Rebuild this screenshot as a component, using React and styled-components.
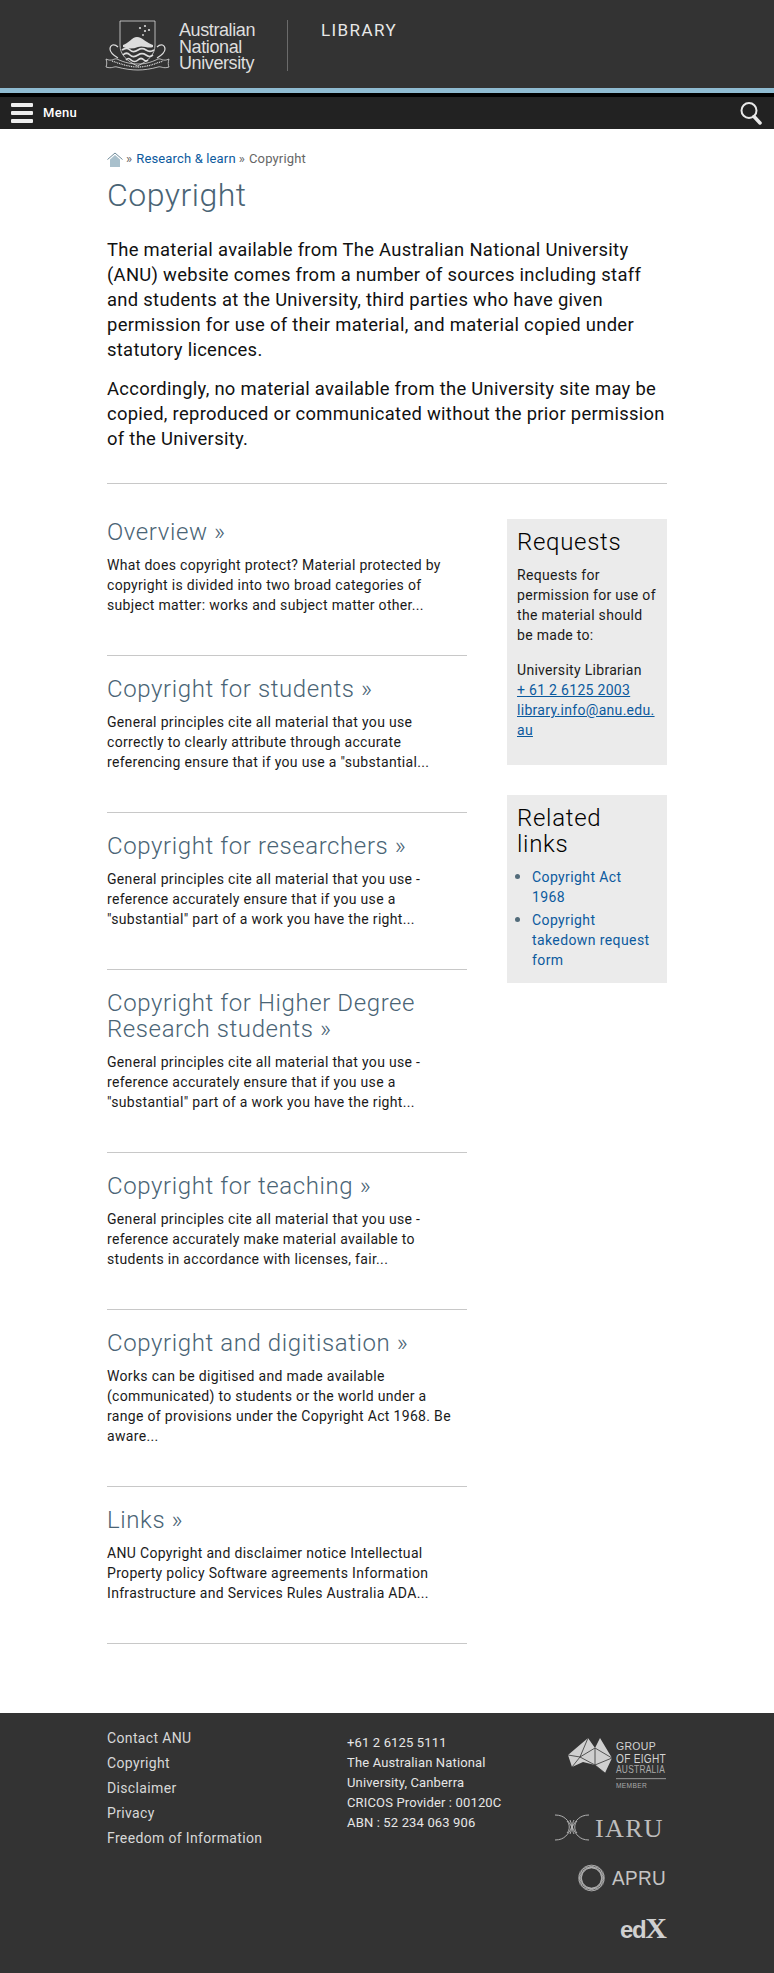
import React from 'react'
import styled, { createGlobalStyle } from 'styled-components'

const Global = createGlobalStyle`
  html, body { margin: 0; padding: 0; background: #fff; }
  body {
    font-family: Roboto, "Noto Sans", sans-serif;
    font-size: 14px;
    font-weight: 400;
    line-height: 20px;
    letter-spacing: 0.35px;
    color: #111;
  }
  a { color: #0b5a9e; text-decoration: none; }
`

const Header = styled.header`
  height: 88px;
  background: #333;
  padding: 20px 0 0 105px;
  box-sizing: border-box;
  display: flex;
  align-items: flex-start;
`
const Crest = styled.svg`
  width: 65px;
  height: 51px;
  flex: none;
`
const Wordmark = styled.div`
  margin-left: 9px;
  padding-top: 2px;
  width: 108px;
  font-family: "Liberation Sans", Arial, sans-serif;
  font-size: 18px;
  line-height: 16.5px;
  letter-spacing: -0.4px;
  color: #dedede;
`
const Divider = styled.div`
  width: 1px;
  height: 51px;
  background: #6b6b6b;
`
const SiteName = styled.div`
  margin-left: 33px;
  font-size: 17px;
  line-height: 20px;
  letter-spacing: 1.4px;
  color: #e8e8e8;
`
const Stripe = styled.div`
  height: 5px;
  background: #8fbbd1;
`
const Nav = styled.nav`
  height: 36px;
  border-top: 4px solid #000;
  box-sizing: border-box;
  background: #222;
  display: flex;
  align-items: center;
  padding: 0 12px 0 11px;
`
const Burger = styled.div`
  width: 22px;
  height: 20px;
  display: flex;
  flex-direction: column;
  justify-content: space-between;
  span {
    height: 4px;
    border-radius: 1px;
    background: #eee;
  }
`
const MenuLabel = styled.span`
  margin-left: 10px;
  font-size: 13px;
  font-weight: 500;
  letter-spacing: 0.3px;
  color: #fff;
`
const SearchIcon = styled.svg`
  margin-left: auto;
  width: 22px;
  height: 24px;
`

const Main = styled.main`
  width: 560px;
  margin: 0 auto;
  padding-top: 20px;
  height: 1584px;
  box-sizing: border-box;
`
const Crumbs = styled.div`
  display: flex;
  align-items: center;
  height: 20px;
  font-size: 13px;
  letter-spacing: 0.15px;
  color: #666;
  svg { margin-right: 3px; }
  span { margin: 0 4px 0 0; }
  a { margin-right: 3px; }
`
const Title = styled.h1`
  margin: 6px 0 22px;
  font-size: 32px;
  line-height: 40px;
  font-weight: 300;
  letter-spacing: 0.5px;
  color: #4a6475;
`
const Lead = styled.p`
  margin: 0 0 14px;
  font-size: 18.4px;
  line-height: 25px;
  letter-spacing: 0.3px;
  color: #111;
`
const Rule = styled.hr`
  margin: 32px 0 35px;
  border: 0;
  border-top: 1px solid #c8c8c8;
`
const Columns = styled.div`
  display: grid;
  grid-template-columns: 360px 160px;
  column-gap: 40px;
  align-items: start;
`
const Item = styled.article`
  border-bottom: 1px solid #c8c8c8;
  padding-bottom: 40px;
  margin-bottom: 20px;
`
const ItemTitle = styled.h2`
  margin: 0 0 10px;
  font-size: 24px;
  line-height: 26px;
  font-weight: 300;
  letter-spacing: 0.6px;
  color: #4a6475;
`
const ItemText = styled.p`
  margin: 0;
  padding-right: 6px;
  font-size: 14px;
  line-height: 20px;
  letter-spacing: 0.32px;
  color: #1a1a1a;
`
const Side = styled.aside`
  display: flex;
  flex-direction: column;
  gap: 30px;
`
const Box = styled.section`
  background: #ebebeb;
  padding: 10px 10px 0;
  height: ${p => p.$h}px;
  box-sizing: border-box;
`
const BoxTitle = styled.h3`
  margin: 0 0 10px;
  font-size: 24px;
  line-height: 26px;
  font-weight: 300;
  letter-spacing: 0.7px;
  color: #000;
`
const BoxText = styled.p`
  margin: 0 0 15px;
  font-size: 14px;
  line-height: 20px;
  letter-spacing: 0.3px;
  color: #1a1a1a;
  a { text-decoration: underline; overflow-wrap: anywhere; }
`
const LinkList = styled.ul`
  margin: 0;
  padding: 0 3px 0 15px;
  letter-spacing: 0.4px;
  color: #526b7a;
  li { margin-bottom: 3px; }
  li::marker { font-size: 16px; }
`

const Footer = styled.footer`
  background: #333;
  height: 260px;
  padding: 13px 107px 0;
  box-sizing: border-box;
  display: grid;
  grid-template-columns: 240px 1fr auto;
  color: #ddd;
`
const FooterLinks = styled.div`
  display: flex;
  flex-direction: column;
  a {
    color: #d8d8d8;
    line-height: 25px;
  }
`
const Address = styled.div`
  padding-top: 7px;
  font-size: 13px;
  line-height: 20px;
  letter-spacing: 0.15px;
  max-width: 160px;
  color: #e6e6e6;
`
const Logos = styled.div`
  display: flex;
  flex-direction: column;
  align-items: flex-end;
  padding-top: 12px;
`
const Logo = styled.svg`
  display: block;
  overflow: visible;
  margin-top: ${p => p.$mt || 0}px;
  margin-right: ${p => p.$mr || 0}px;
`

const items = [
  ['Overview »', 'What does copyright protect? Material protected by copyright is divided into two broad categories of subject matter: works and subject matter other...'],
  ['Copyright for students »', 'General principles cite all material that you use correctly to clearly attribute through accurate referencing ensure that if you use a "substantial...'],
  ['Copyright for researchers »', 'General principles cite all material that you use - reference accurately ensure that if you use a "substantial" part of a work you have the right...'],
  ['Copyright for Higher Degree Research students »', 'General principles cite all material that you use - reference accurately ensure that if you use a "substantial" part of a work you have the right...'],
  ['Copyright for teaching »', 'General principles cite all material that you use - reference accurately make material available to students in accordance with licenses, fair...'],
  ['Copyright and digitisation »', 'Works can be digitised and made available (communicated) to students or the world under a range of provisions under the Copyright Act 1968. Be aware...'],
  ['Links »', 'ANU Copyright and disclaimer notice Intellectual Property policy Software agreements Information Infrastructure and Services Rules Australia ADA...'],
]

function CrestLogo() {
  return (
    <Crest viewBox="0 0 65 51" fill="none" stroke="#dcdcdc" strokeWidth="0.8">
      <path d="M15 1l35 0 0 24c0 10-7 16-17.500 21C22 41 15 35 15 25z" />
      <g fill="#dcdcdc" stroke="none">
        <circle cx="35" cy="8" r="1.100" />
        <circle cx="40" cy="6" r="1.100" />
        <circle cx="44" cy="10" r="1.100" />
        <circle cx="40" cy="11" r="1.100" />
        <circle cx="38" cy="15" r="0.900" />
        <path d="M18 25c5-1 9-8 14-8s11 7 16 8v2c-5 2-10-2-15 0s-10 2-15 0z" />
      </g>
      <g stroke="#dcdcdc" strokeWidth="1.700">
        <path d="M17 30c4-3 6-2 8 0s5 2 8 0 5-2 8 0 5 2 8 0" />
        <path d="M18 35c3-3 5-2 7 0s5 2 8 0 5-2 8 0 4 2 7 0" />
        <path d="M21 40c2-2 3-2 5 0s5 2 7 0 4-2 6 0 3 1 4 0" />
      </g>
      <path d="M13 27c-4-4-8-2-8 2 0 3 3 6 8 9M52 27c4-4 8-2 8 2 0 3-3 6-8 9" strokeWidth="1.200" />
      <path d="M1 39c6 3 8-1 11 0 8 4 15 5 21 5s12-1 20-5c3-1 5 3 11 0-1 3-1 6 0 8-6 2-8-1-11 0-7 2-14 3-20 3s-14-1-21-3c-3-1-5 2-11 0 1-3 1-5 0-8z" />
      <path d="M7 41c9 3 17 6 26 6s16-3 25-6" strokeDasharray="1 0.800" strokeWidth="1.300" />
    </Crest>
  )
}

function HomeIcon() {
  return (
    <svg width="16" height="15" viewBox="0 0 16 15">
      <path d="M3 7.500L8 3l5 4.500V15H3z" fill="#a9c0cc" />
      <path d="M.5 7.500L8 1l7.500 6.500" fill="none" stroke="#6f8a99" strokeWidth="1" />
    </svg>
  )
}

function Go8Logo() {
  return (
    <Logo width="98" height="52" viewBox="0 0 98 52" $mr={1}>
      <path d="M0 17L20 0l7 10 5-10 12 20-7 15-10-8-12-3-11 5z" fill="#cfcfcf" />
      <path d="M0 17l12 2 15-9M20 0l-8 19-8 10M12 19l15 8 10 8M27 10v17l17-7M27 10l17 10" stroke="#333" strokeWidth="0.8" fill="none" />
      <g fill="#d4d4d4" fontFamily="'Liberation Sans', sans-serif">
        <text x="48" y="12" fontSize="11.500" textLength="40" lengthAdjust="spacingAndGlyphs">GROUP</text>
        <text x="48" y="25" fontSize="12.500" textLength="50" lengthAdjust="spacingAndGlyphs">OF EIGHT</text>
        <text x="48" y="35" fontSize="11" textLength="49" lengthAdjust="spacingAndGlyphs" fill="#aaa">AUSTRALIA</text>
        <text x="48" y="50" fontSize="7.500" textLength="31" lengthAdjust="spacingAndGlyphs" fill="#aaa">MEMBER</text>
      </g>
      <rect x="48" y="40" width="50" height="1.200" fill="#888" />
    </Logo>
  )
}

function IaruLogo() {
  return (
    <Logo width="109" height="27" viewBox="0 0 109 27" $mt={24} $mr={3}>
      <g fill="none" stroke="#bdbdbd" strokeWidth="0.9">
        <path d="M0 1c10 0 13 6 17 12 4-6 7-12 17-12" />
        <path d="M0 26c10 0 13-6 17-13 4 7 7 13 17 13" />
        <path d="M12 7c3 3 3 9 0 12M15 6c2 3 2 11 0 14M19 6c-2 3-2 11 0 14M22 7c-3 3-3 9 0 12" />
      </g>
      <text x="40" y="23" fontFamily="'Liberation Serif', serif" fontSize="26" fill="#bdbdbd" textLength="68">IARU</text>
    </Logo>
  )
}

function ApruLogo() {
  const rings = [0, 30, 60, 90, 120, 150]
  return (
    <Logo width="88" height="28" viewBox="0 0 88 28" $mt={23} $mr={1}>
      <g fill="none" stroke="#c4c4c4" strokeWidth="0.6">
        {rings.map(r => (
          <ellipse key={r} cx="13.500" cy="14" rx="13" ry="10" transform={`rotate(${r} 13.500 14)`} />
        ))}
      </g>
      <text x="34" y="21" fontFamily="'Liberation Sans', sans-serif" fontSize="20" fill="#c4c4c4" textLength="54" lengthAdjust="spacingAndGlyphs">APRU</text>
    </Logo>
  )
}

function EdxLogo() {
  return (
    <Logo width="44" height="20" viewBox="0 0 44 20" $mt={26} $mr={3}>
      <text x="0" y="20" fill="#d0d0d0" fontWeight="700" letterSpacing="-1.400">
        <tspan fontFamily="'Liberation Sans', sans-serif" fontSize="24">ed</tspan>
        <tspan fontFamily="'Liberation Serif', serif" fontSize="30">X</tspan>
      </text>
    </Logo>
  )
}

export default function App() {
  return (
    <>
      <Global />
      <Header>
        <CrestLogo />
        <Wordmark>Australian National University</Wordmark>
        <Divider />
        <SiteName>LIBRARY</SiteName>
      </Header>
      <Stripe />
      <Nav>
        <Burger><span /><span /><span /></Burger>
        <MenuLabel>Menu</MenuLabel>
        <SearchIcon viewBox="0 0 22 24" fill="none" stroke="#e8e8e8">
          <circle cx="9" cy="9.500" r="7.500" strokeWidth="2" />
          <path d="M14 15.500l6 6.500" strokeWidth="3.500" strokeLinecap="round" />
        </SearchIcon>
      </Nav>
      <Main>
        <Crumbs>
          <HomeIcon />
          <span>»</span>
          <a href="#r">Research &amp; learn</a>
          <span>»</span>
          Copyright
        </Crumbs>
        <Title>Copyright</Title>
        <Lead>The material available from The Australian National University (ANU) website comes from a number of sources including staff and students at the University, third parties who have given permission for use of their material, and material copied under statutory licences.</Lead>
        <Lead>Accordingly, no material available from the University site may be copied, reproduced or communicated without the prior permission of the University.</Lead>
        <Rule />
        <Columns>
          <div>
            {items.map(([title, text]) => (
              <Item key={title}>
                <ItemTitle>{title}</ItemTitle>
                <ItemText>{text}</ItemText>
              </Item>
            ))}
          </div>
          <Side>
            <Box $h={246}>
              <BoxTitle>Requests</BoxTitle>
              <BoxText>Requests for permission for use of the material should be made to:</BoxText>
              <BoxText>
                University Librarian<br />
                <a href="#t">+ 61 2 6125 2003</a><br />
                <a href="#m">library.info@anu.edu.au</a>
              </BoxText>
            </Box>
            <Box $h={188}>
              <BoxTitle>Related links</BoxTitle>
              <LinkList>
                <li><a href="#a">Copyright Act 1968</a></li>
                <li><a href="#b">Copyright takedown request form</a></li>
              </LinkList>
            </Box>
          </Side>
        </Columns>
      </Main>
      <Footer>
        <FooterLinks>
          <a href="#1">Contact ANU</a>
          <a href="#2">Copyright</a>
          <a href="#3">Disclaimer</a>
          <a href="#4">Privacy</a>
          <a href="#5">Freedom of Information</a>
        </FooterLinks>
        <Address>
          +61 2 6125 5111<br />
          The Australian National University, Canberra<br />
          CRICOS Provider : 00120C<br />
          ABN : 52 234 063 906
        </Address>
        <Logos>
          <Go8Logo />
          <IaruLogo />
          <ApruLogo />
          <EdxLogo />
        </Logos>
      </Footer>
    </>
  )
}
